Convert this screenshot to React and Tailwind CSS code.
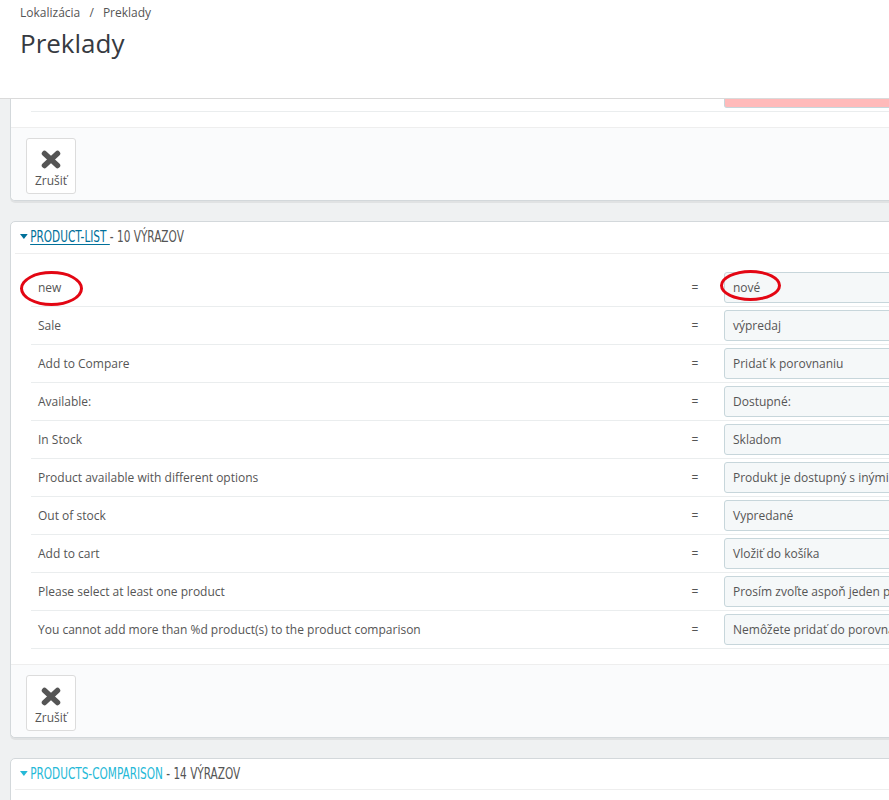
import React from 'react';

const rows = [
  ['new', 'nové'],
  ['Sale', 'výpredaj'],
  ['Add to Compare', 'Pridať k porovnaniu'],
  ['Available:', 'Dostupné:'],
  ['In Stock', 'Skladom'],
  ['Product available with different options', 'Produkt je dostupný s inými možnosťami'],
  ['Out of stock', 'Vypredané'],
  ['Add to cart', 'Vložiť do košíka'],
  ['Please select at least one product', 'Prosím zvoľte aspoň jeden produkt'],
  ['You cannot add more than %d product(s) to the product comparison', 'Nemôžete pridať do porovnania viac ako %d produkt(ov)'],
];

const heading = "inline-block origin-left scale-x-[0.78] whitespace-nowrap font-['DejaVu_Sans_Condensed','DejaVu_Sans',sans-serif] text-[15px] uppercase";

const Caret = ({ color }) => (
  <svg width="10" height="5" viewBox="0 0 10 5" className="inline-block mr-[3px] align-[3px]">
    <path d="M0 0 H10 L5 5 Z" fill={color} />
  </svg>
);

const CancelButton = () => (
  <button className="w-[50px] h-[56px] bg-white border border-[#dcdcdc] rounded-[3px] flex flex-col items-center pt-[11px] text-[#555]">
    <svg width="20" height="19" viewBox="0 0 20 19">
      <path
        d="M3.5 3.5 L16.5 15.5 M16.5 3.5 L3.5 15.5"
        stroke="#555"
        strokeWidth="5.5"
        strokeLinecap="round"
      />
    </svg>
    <span className="text-[12px] leading-[14px] mt-[5px]">Zrušiť</span>
  </button>
);

const Footer = () => (
  <div className="border-t border-[#eee] bg-[#fafbfc] px-[15px] pt-[10px] pb-[6px] rounded-b-[5px]">
    <CancelButton />
  </div>
);

const Row = ({ label, value, marked }) => (
  <div className="relative flex items-center h-[38px] border-b border-[#eaedee]">
    <div className="w-[649px] pl-[7px]">{label}</div>
    <div className="w-[30px] text-center">=</div>
    <div className="ml-[14px] w-[420px] h-[31px] flex items-center px-[8px] bg-[#f5f8f9] border border-[#c7d6db] rounded-[3px] whitespace-nowrap overflow-hidden">
      {value}
    </div>
    {marked && (
      <>
        <div className="absolute left-[-11px] top-[2px] w-[63px] h-[35px] border-[3px] border-[#e30613] rounded-[50%]" />
        <div className="absolute left-[689px] top-[1px] w-[61px] h-[31px] border-[3px] border-[#e30613] rounded-[50%]" />
      </>
    )}
  </div>
);

export default function App() {
  return (
    <div className="min-h-[800px] w-full overflow-hidden bg-[#eff1f2] font-['Open_Sans',sans-serif] text-[12px] text-[#555]">
      <header className="h-[99px] bg-white border-b border-[#dadada] px-[20px] pt-[4px]">
        <div className="text-[12px] leading-[18px] text-[#555]">
          Lokalizácia <span className="mx-[6px]">/</span> Preklady
        </div>
        <h1 className="text-[26px] leading-[42px] text-[#363a41]">Preklady</h1>
      </header>

      <div className="pl-[10px] w-[1200px] pb-[20px]">
        <div className="bg-white border-x border-b border-[#d3d8db] rounded-b-[5px] shadow-[0_2px_0_rgba(0,0,0,0.06)]">
          <div className="px-[20px]">
            <div className="flex items-end h-[13px] border-b border-[#eaedee]">
              <div className="ml-[693px] w-[420px] h-[9px] mb-[3px] bg-[#ffbaba] border-x border-b border-[#c7d6db] rounded-b-[3px]" />
            </div>
          </div>
          <div className="h-[15px]" />
          <Footer />
        </div>

        <div className="mt-[20px] bg-white border border-[#d3d8db] rounded-[5px] shadow-[0_2px_0_rgba(0,0,0,0.06)]">
          <div className="mx-[4px] h-[32px] border-b border-[#eee] flex items-center pl-[5px]">
            <span className={heading}>
              <Caret color="#00709a" />
              <span className="text-[#00709a] underline underline-offset-2">PRODUCT-LIST </span>
              <span className="text-[#555]"> - 10 výrazov</span>
            </span>
          </div>
          <div className="px-[20px] pt-[15px]">
            {rows.map(([l, v], i) => (
              <Row key={l} label={l} value={v} marked={i === 0} />
            ))}
          </div>
          <div className="h-[15px]" />
          <Footer />
        </div>

        <div className="mt-[20px] bg-white border border-[#d3d8db] rounded-[5px] shadow-[0_2px_0_rgba(0,0,0,0.06)] h-[80px]">
          <div className="mx-[4px] h-[31px] border-b border-[#eee] flex items-center pl-[5px]">
            <span className={heading}>
              <Caret color="#25b9d7" />
              <span className="text-[#25b9d7]">PRODUCTS-COMPARISON</span>
              <span className="text-[#555]"> - 14 výrazov</span>
            </span>
          </div>
        </div>
      </div>
    </div>
  );
}
